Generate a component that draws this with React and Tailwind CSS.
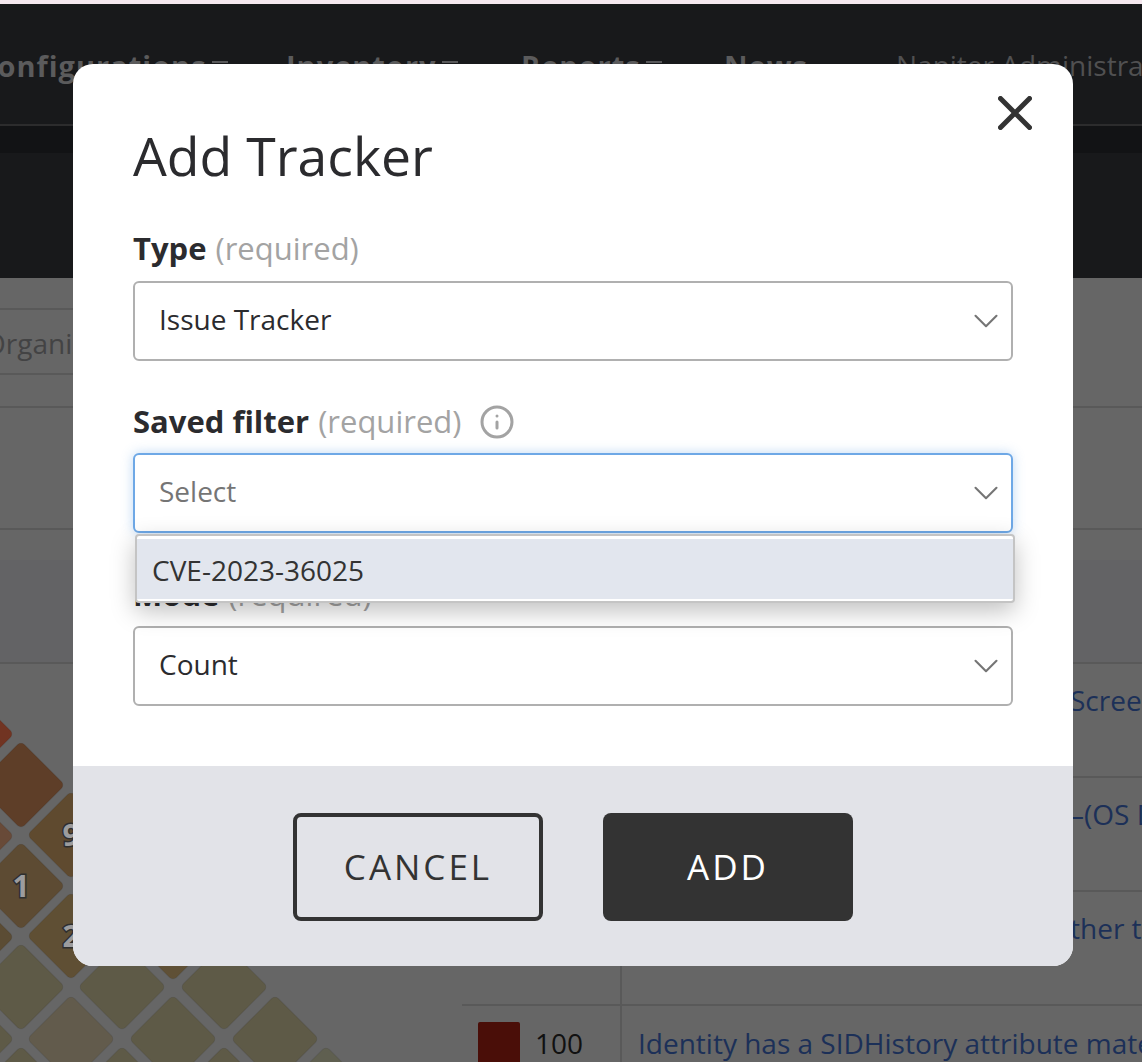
import { ChevronDown, Info } from 'lucide-react';

// heatmap lattice, page coordinates minus the 530px the chart section starts at
const tiles = [
  [-30, 734, '#713422'],
  [21, 785, '#5e3e28'],
  [-30, 836, '#684a38'],
  [71, 835, '#5f4a2f'],
  [21, 886, '#5d4b33'],
  [122, 886, '#5e4b32'],
  [-30, 937, '#5b4c34'],
  [71, 936, '#5f4f34'],
  [173, 937, '#5f5036'],
  [21, 987, '#5e5a47'],
  [122, 987, '#5e5a47'],
  [224, 987, '#5e5a47'],
  [-30, 1039, '#5e5a47'],
  [71, 1039, '#625b4c'],
  [173, 1039, '#5e5a47'],
  [275, 1039, '#5e5a47'],
  [21, 1090, '#5e5a47'],
  [122, 1090, '#5e5a47'],
  [224, 1090, '#5e5a47'],
  [326, 1090, '#5f5f50'],
];

const labels = [
  [21, 886, '1'],
  [71, 835, '9'],
  [71, 936, '2'],
];

const rows = ['Screen', '–(OS D', 'ther t'];

function Caret() {
  return <span className="inline-block w-[16px] h-[2px] ml-[5px] bg-[#58585a] align-[14px]" />;
}

function Select({ value, placeholder, focused }) {
  return (
    <div
      className={`flex items-center justify-between h-[80px] rounded-[6px] border-2 bg-white pl-[24px] pr-[4px] text-[28px] ${
        focused
          ? 'border-[#6ea8e6] shadow-[0_0_12px_rgba(110,168,230,0.45)] text-[#757575]'
          : 'border-[#b0b0b0] text-[#2b2b2e]'
      }`}
    >
      <span className="mb-[4px]">{value || placeholder}</span>
      <ChevronDown size={42} strokeWidth={1.2} className="text-[#757575]" />
    </div>
  );
}

function FieldLabel({ name, children }) {
  return (
    <div className="flex items-center h-[40px] mb-[12px] text-[31px] whitespace-nowrap">
      <span className="font-bold text-[#2b2b2e]">{name}</span>
      <span className="ml-[9px] text-[#a3a3a3]">(required)</span>
      {children}
    </div>
  );
}

export default function App() {
  return (
    <div className="relative w-[1142px] h-[1062px] overflow-hidden bg-[#666666] [font-family:'Open_Sans',sans-serif]">
      {/* Dimmed page behind the modal */}
      <div className="h-[4px] bg-[#f5e8ef]" />
      <div className="h-[122px] bg-[#18191b] border-b-2 border-[#2c2c2d] flex items-start pt-[40px] text-[29px] whitespace-nowrap text-[#5b5b5c] overflow-hidden">
        <span className="ml-[-22px] w-[308px] shrink-0 font-bold tracking-[1px]">Configurations<Caret /></span>
        <span className="w-[235px] shrink-0 font-bold tracking-[1px]">Inventory<Caret /></span>
        <span className="w-[203px] shrink-0 font-bold tracking-[1px]">Reports<Caret /></span>
        <span className="w-[172px] shrink-0 font-bold tracking-[1px]">News</span>
        <span className="shrink-0 text-[28px] text-[#505051]">Napiter Administrator</span>
      </div>
      <div className="h-[27px] bg-[#121315]" />
      <div className="h-[125px] bg-[#18191b]" />

      <div className="h-[130px] border-b-2 border-[#595959] pt-[30px]">
        <div className="w-[90px] h-[67px] border-y-2 border-r-2 border-[#595959] rounded-r-[6px] flex items-center overflow-hidden text-[28px] text-[#434344] whitespace-nowrap">
          <span className="ml-[-16px] mt-[2px]">Organization</span>
        </div>
      </div>
      <div className="h-[122px] border-b-2 border-[#595959]" />

      <div className="relative pl-[462px]">
        {/* Risk heatmap */}
        <svg className="absolute left-0 top-0" width="462" height="532" viewBox="0 530 462 532">
          {tiles.map(([x, y, fill]) => (
            <rect
              key={`${x}-${y}`}
              x={x - 31}
              y={y - 31}
              width="62"
              height="62"
              rx="5"
              fill={fill}
              stroke="#00000014"
              transform={`rotate(45 ${x} ${y})`}
            />
          ))}
          {labels.map(([x, y, t]) => (
            <text
              key={t}
              x={x}
              y={y + 11}
              textAnchor="middle"
              fontSize="30"
              fontWeight="700"
              fill="#9c9c9e"
              stroke="#2f2f2f"
              strokeWidth="3"
              paintOrder="stroke"
            >
              {t}
            </text>
          ))}
        </svg>

        {/* Table */}
        <div className="h-[30px]" />
        <div className="h-[104px] bg-[#636365] border-b-2 border-[#595959] ml-[-462px]" />
        {rows.map((text) => (
          <div key={text} className="h-[114px] flex border-b-2 border-[#595959] text-[28px] text-[#1c3058] whitespace-nowrap overflow-hidden">
            <div className="w-[160px] border-r-2 border-[#595959] shrink-0" />
            <div className="ml-[448px] pt-[15px]">{text}</div>
          </div>
        ))}
        <div className="flex h-[60px] overflow-hidden text-[28px] whitespace-nowrap">
          <div className="w-[160px] shrink-0 border-r-2 border-[#595959] flex items-start pt-[16px] pl-[16px]">
            <div className="w-[42px] h-[44px] rounded-[2px] bg-[#4a0e08] shrink-0" />
            <span className="ml-[15px] text-[#111111]">100</span>
          </div>
          <div className="pl-[16px] pt-[16px] text-[#1c3058]">Identity has a SIDHistory attribute mate</div>
        </div>
      </div>

      {/* Modal */}
      <div className="absolute left-[73px] top-[64px] w-[1000px] h-[902px] rounded-[20px] overflow-hidden bg-white flex flex-col">
        <div className="relative h-[702px] px-[60px] pt-[60px]">
          <button className="absolute right-[41px] top-[32px] text-[#333333]">
            <svg width="34" height="34" viewBox="0 0 34 34" fill="none" stroke="currentColor" strokeWidth="5" strokeLinecap="round">
              <path d="M2.5 2.5 31.5 31.5M31.5 2.5 2.5 31.5" />
            </svg>
          </button>

          <h2 className="h-[64px] leading-[64px] text-[53.5px] text-[#2b2b2e] mb-[40px]">Add Tracker</h2>

          <div className="pb-[1px]">
            <FieldLabel name="Type" />
          </div>
          <Select value="Issue Tracker" />

          <div className="mt-[40px]">
            <FieldLabel name="Saved filter">
              <Info size={36} strokeWidth={2} className="ml-[18px] mt-[2px] text-[#a3a3a3]" />
            </FieldLabel>
            <div className="relative">
              <Select placeholder="Select" focused />
              {/* Open dropdown */}
              <div className="absolute left-[2px] top-[81px] w-[880px] h-[69px] rounded-[4px] border-2 border-[#c4c4c4] bg-white pt-[3px] pb-[2px] z-10 shadow-[0_8px_24px_rgba(0,0,0,0.25)]">
                <div className="h-[60px] bg-[#e2e6ee] flex items-center pl-[15px] pt-[1px] text-[28px] text-[#333333]">
                  CVE-2023-36025
                </div>
              </div>
            </div>
          </div>

          <div className="mt-[41px]">
            <FieldLabel name="Mode" />
            <Select value="Count" />
          </div>
        </div>

        <div className="flex-1 bg-[#e2e3e8] flex items-center justify-center gap-[60px] pt-[2px]">
          <button className="w-[250px] h-[108px] rounded-[8px] border-4 border-[#333333] text-[35px] font-medium tracking-[3px] text-[#333333]">
            CANCEL
          </button>
          <button className="w-[250px] h-[108px] rounded-[8px] bg-[#333333] text-[35px] font-medium tracking-[3px] text-white">
            ADD
          </button>
        </div>
      </div>
    </div>
  );
}
